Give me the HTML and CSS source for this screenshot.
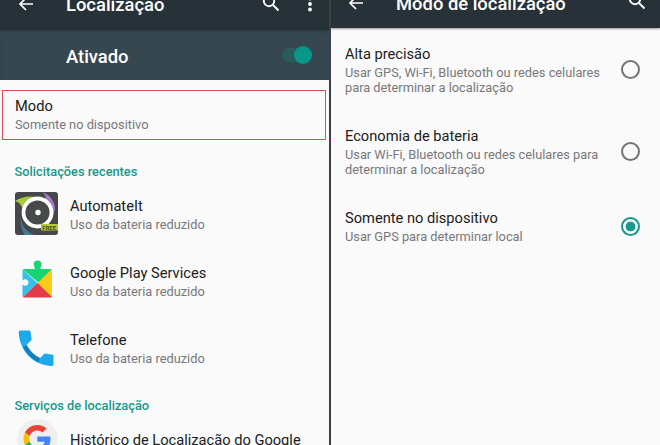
FILE: index.html
```html
<!DOCTYPE html>
<html lang="pt-BR">
<head>
<meta charset="utf-8">
<title>Localização</title>
<link rel="stylesheet" href="styles.css">
</head>
<body>
<main class="screens">
  <section class="screen">
    <header class="appbar">
      <svg class="back" viewBox="0 0 16 14"><path d="M15 7H2M8 1 2 7l6 6"/></svg>
      <h1 class="appbar-title">Localização</h1>
      <svg class="search" viewBox="0 0 18 18"><circle cx="7" cy="7" r="5.2"/><path d="m11 11 5.500 5.500"/></svg>
      <svg class="more" viewBox="0 0 4 16"><circle cx="2" cy="2.500" r="1.900"/><circle cx="2" cy="8" r="1.900"/><circle cx="2" cy="13.500" r="1.900"/></svg>
    </header>
    <div class="master">
      <span>Ativado</span>
      <span class="switch"><span class="thumb"></span></span>
    </div>
    <div class="mode">
      <div class="name">Modo</div>
      <div class="desc">Somente no dispositivo</div>
    </div>
    <h2 class="category">Solicitações recentes</h2>
    <div class="app">
      <svg class="icon" viewBox="0 0 44 44">
        <clipPath id="tile"><rect width="43" height="43" rx="3"/></clipPath>
        <g clip-path="url(#tile)">
          <rect width="44" height="44" fill="#45474a"/>
          <path d="M0 9C8 4 17 3 27 7L14 12 8 19C7 13 4 10 0 9z" fill="#a4c93c"/>
          <path d="M27 0c8 3 13 9 13 17l-3 10-4-12-6-6c5 0 5-5 0-9z" fill="#a879c5"/>
          <path d="M6 25c0 10 7 16 16 19H10C6 37 5 31 6 25z" fill="#447a96"/>
          <circle cx="22.500" cy="20.500" r="14" fill="#48494b" stroke="#fff" stroke-width="3.800"/>
          <circle cx="23" cy="20.500" r="2.700" fill="#fff"/>
          <rect x="26" y="32" width="18" height="6.500" fill="#b5c83c"/>
          <text x="27.200" y="37.600" class="badge">FREE</text>
        </g>
      </svg>
      <div><div class="name">AutomateIt</div><div class="desc">Uso da bateria reduzido</div></div>
    </div>
    <div class="app">
      <svg class="icon puzzle" viewBox="0 0 44 44">
        <clipPath id="puzzle"><path d="M9 11h10.500c1-1-.8-2.300-.8-4.700a3.900 3.900 0 0 1 7.800 0c0 2.400-1.800 3.700-.8 4.700H35.500a1.500 1.500 0 0 1 1.500 1.500V38a1.500 1.500 0 0 1-1.500 1.500H9A1.500 1.500 0 0 1 7.500 38V26.500c1.500 1.500 3 1.500 4 1a3.200 3.200 0 0 0 0-6c-1-.5-2.500-.5-4 1v-10A1.500 1.500 0 0 1 9 11z"/></clipPath>
        <g clip-path="url(#puzzle)">
          <path d="M0 0h44v5L24 25 7 11z" fill="#16d572"/>
          <path d="M7 11 22.500 25 7 40z" fill="#35c0ec"/>
          <path d="M37 11 22.500 25 37 40z" fill="#fccb19"/>
          <path d="M7 40 22.500 25 38 40z" fill="#e33b49"/>
        </g>
      </svg>
      <div><div class="name">Google Play Services</div><div class="desc">Uso da bateria reduzido</div></div>
    </div>
    <div class="app">
      <svg class="icon phone" viewBox="0 0 44 44">
        <path d="M6.200 5.500H15a1.600 1.600 0 0 1 1.600 1.400c.2 2.500.5 4.500 1 6.700.2.700 0 1.200-.4 1.600L12.500 20C9 15.500 5 12 4.700 7A1.500 1.500 0 0 1 6.200 5.500z" fill="#1caae9"/>
        <path d="M4.700 7C5.500 26 19 40.500 37.900 40.900a1.600 1.600 0 0 0 1.600-1.600v-8.100c0-.9-.6-1.500-1.500-1.600-2.100-.1-4.100-.4-6.300-1-.7-.2-1.200-.1-1.700.4L26 33.200C20 30 16 26 12.500 20z" fill="#1caae9"/>
        <path d="M9.200 22.500 12.500 20c3.500 6 7.500 10 13.500 13.200l-1.500 4C18 34 13 29 9.200 22.500z" fill="#137dbd"/>
      </svg>
      <div><div class="name">Telefone</div><div class="desc">Uso da bateria reduzido</div></div>
    </div>
    <h2 class="category services">Serviços de localização</h2>
    <div class="app google">
      <svg class="icon" viewBox="0 0 44 44">
        <circle cx="22.500" cy="22" r="20" fill="#efefef"/>
        <g transform="translate(8.500 8) scale(.575)">
          <path fill="#ea4335" d="M24 9.500c3.540 0 6.710 1.220 9.210 3.600l6.850-6.850C35.900 2.380 30.470 0 24 0 14.620 0 6.510 5.380 2.560 13.220l7.980 6.190C12.430 13.720 17.740 9.500 24 9.500z"/>
          <path fill="#4285f4" d="M46.980 24.550c0-1.570-.15-3.090-.38-4.550H24v9.020h12.940c-.58 2.960-2.260 5.480-4.780 7.180l7.730 6c4.510-4.180 7.090-10.360 7.090-17.650z"/>
          <path fill="#fbbc05" d="M10.530 28.590A14.500 14.500 0 0 1 9.770 24c0-1.600.27-3.140.76-4.590l-7.980-6.190A23.900 23.900 0 0 0 0 24c0 3.880.92 7.540 2.560 10.780z"/>
          <path fill="#34a853" d="M24 48c6.480 0 11.930-2.130 15.890-5.810l-7.730-6c-2.150 1.450-4.920 2.300-8.160 2.300-6.260 0-11.570-4.220-13.470-9.910l-7.980 6.190C6.510 42.620 14.620 48 24 48z"/>
        </g>
      </svg>
      <div class="name">Histórico de Localização do Google</div>
    </div>
  </section>
  <section class="screen right">
    <header class="appbar">
      <svg class="back" viewBox="0 0 16 14"><path d="M15 7H2M8 1 2 7l6 6"/></svg>
      <h1 class="appbar-title">Modo de localização</h1>
      <svg class="search" viewBox="0 0 18 18"><circle cx="7" cy="7" r="5.2"/><path d="m11 11 5.500 5.500"/></svg>
    </header>
    <div class="options">
      <div class="option">
        <div><div class="name">Alta precisão</div><div class="desc">Usar GPS, Wi-Fi, Bluetooth ou redes celulares<br>para determinar a localização</div></div>
        <span class="radio"></span>
      </div>
      <div class="option">
        <div><div class="name">Economia de bateria</div><div class="desc">Usar Wi-Fi, Bluetooth ou redes celulares para<br>determinar a localização</div></div>
        <span class="radio"></span>
      </div>
      <div class="option last">
        <div><div class="name">Somente no dispositivo</div><div class="desc">Usar GPS para determinar local</div></div>
        <span class="radio checked"></span>
      </div>
    </div>
  </section>
</main>
</body>
</html>
```
FILE: styles.css
```css
* { box-sizing: border-box; }
body {
  margin: 0;
  width: 660px;
  height: 445px;
  overflow: hidden;
  font-family: Roboto, "Liberation Sans", sans-serif;
  color: #202022;
  background: #fafafa;
}
h1, h2 { margin: 0; }
svg { display: block; flex: none; }
.screens {
  display: grid;
  grid-template-columns: 329px 331px;
  height: 445px;
  overflow: hidden;
}
.screen { background: #fafafa; height: 445px; overflow: hidden; }
.right { border-left: 2px solid #3c4145; }
.appbar {
  display: flex;
  align-items: center;
  height: 50px;
  margin-top: -20px;
  padding-left: 18px;
  background: #273238;
  color: #fff;
}
.right .appbar { height: 48px; padding-left: 17px; box-shadow: 0 1px 2px #0006; }
.appbar-title {
  flex: 1;
  margin-left: 32px;
  font-size: 18.4px;
  font-weight: 500;
  line-height: 24px;
  white-space: nowrap;
}
.back { width: 16px; height: 14px; fill: none; stroke: #fff; stroke-width: 1.7; margin-top: -2px; }
.search { width: 18px; height: 18px; fill: none; stroke: #fff; stroke-width: 1.9; margin: -5px 28px 0 0; }
.right .search { margin-right: 14px; margin-top: -6px; }
.more { width: 4px; height: 16px; fill: #fff; margin: -3px 17px 0 0; }
.master {
  display: flex;
  align-items: center;
  justify-content: space-between;
  height: 50px;
  padding: 3px 17px 0 66px;
  background: #37474f;
  box-shadow: inset 0 2px 2px #0002;
  color: #fff;
  font-size: 18.4px;
  font-weight: 500;
  line-height: 24px;
}
.switch {
  display: flex;
  align-items: center;
  justify-content: flex-end;
  width: 30px;
  height: 14px;
  margin-top: -3px;
  border-radius: 7px;
  background: #2b5a5b;
}
.thumb { width: 18px; height: 18px; flex: none; border-radius: 50%; background: #079788; }
.mode {
  margin: 10px 3px 0 2px;
  height: 50px;
  padding: 6px 0 0 12px;
  border: 1px solid #dc5052;
}
.name { font-size: 14.65px; line-height: 18px; margin-bottom: 2px; white-space: nowrap; }
.desc { font-size: 12.8px; line-height: 15px; color: #78787a; white-space: nowrap; }
.category {
  height: 39px;
  padding: 23px 0 0 14.5px;
  font-size: 12.8px;
  line-height: 18px;
  font-weight: 500;
  color: #16988a;
  white-space: nowrap;
}
.app {
  display: flex;
  align-items: center;
  gap: 11px;
  height: 67px;
  padding: 3px 0 0 15px;
}
.icon { width: 44px; height: 44px; }
.puzzle { margin-top: -2px; }
.phone { margin: -3px 1px 0 -1px; }
.badge { font: 700 6px Roboto, sans-serif; fill: #4b5323; }
.services { height: 36px; padding-top: 17px; }
.google { padding-top: 0; height: 46px; }
.google .name { margin: 2px 0 0; }
.options { padding-top: 16px; }
.option {
  display: flex;
  align-items: center;
  justify-content: space-between;
  height: 52px;
  margin-bottom: 30px;
  padding: 0 20px 0 14px;
}
.last { height: 37px; }
.radio {
  width: 19px;
  height: 19px;
  flex: none;
  margin-top: -1px;
  border: 2px solid #747474;
  border-radius: 50%;
}
.checked {
  border-color: #16988a;
  background: radial-gradient(circle, #16988a 4.500px, transparent 5.200px);
}
```
